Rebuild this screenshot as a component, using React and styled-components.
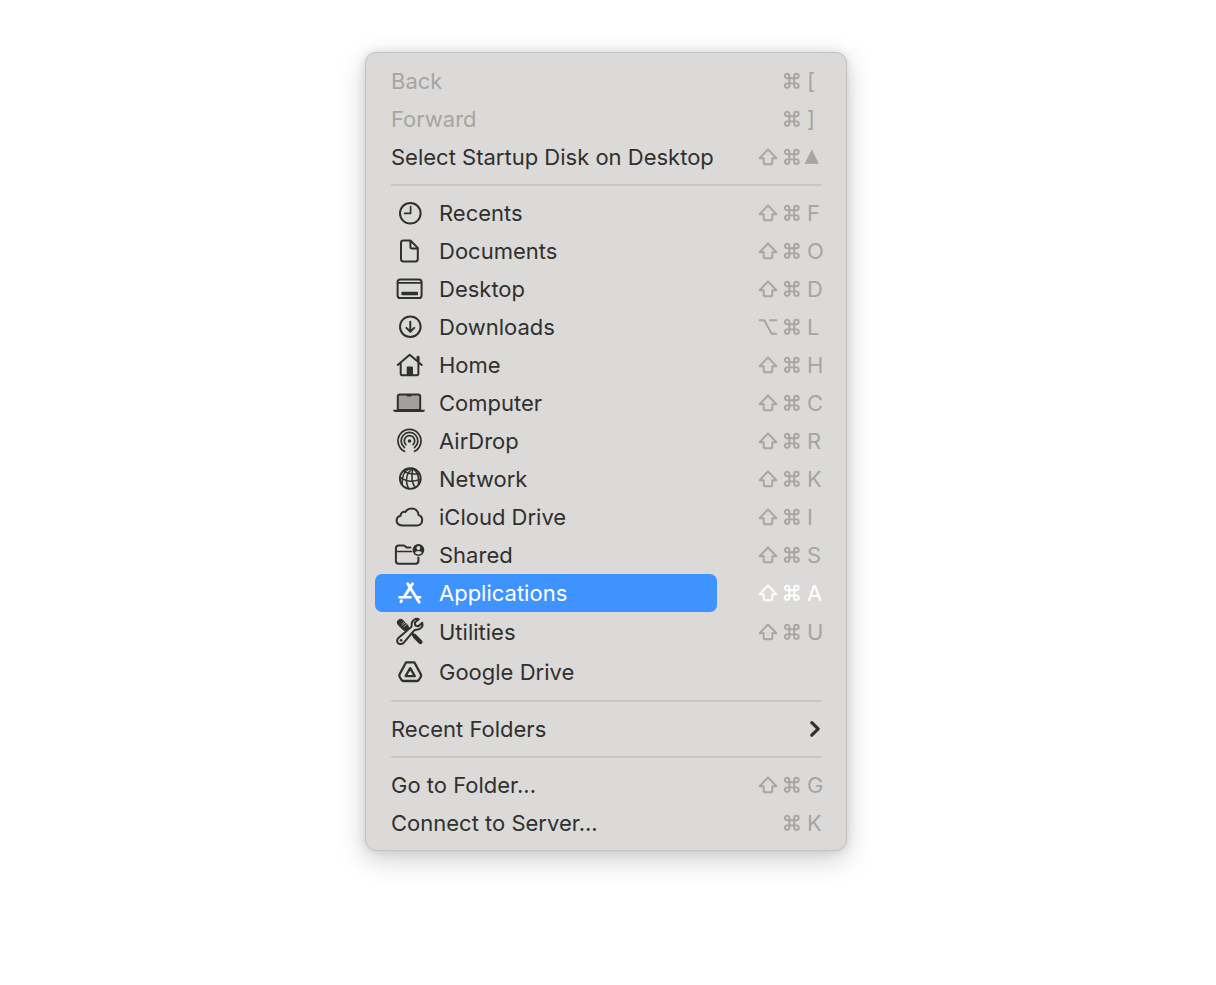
import React from "react";
import styled, { createGlobalStyle } from "styled-components";

const GlobalStyle = createGlobalStyle`
  *, *::before, *::after { box-sizing: border-box; }
  body { margin: 0; background: #fff; }
`;

const Page = styled.main`
  display: flex;
  justify-content: center;
  align-items: flex-start;
  min-height: 100vh;
  padding: 52px 4px 52px 0;
  background: #ffffff;
  font-family: Inter, "Liberation Sans", sans-serif;
`;

const Menu = styled.div`
  width: 100%;
  max-width: 482px;
  padding: 9px 0 8px;
  border: 1px solid #c3c2c1;
  border-radius: 11px;
  background: #dbdad8;
  box-shadow: 0 8px 28px rgba(0, 0, 0, 0.2), 0 0 10px rgba(0, 0, 0, 0.1);
`;

const Row = styled.button`
  display: flex;
  align-items: center;
  justify-content: space-between;
  width: 100%;
  height: ${(p) => (p.$tall ? 40 : 38)}px;
  padding: 0 22px 0 9px;
  border: 0;
  background: none;
  font-family: inherit;
  font-size: 22px;
  line-height: 28px;
  text-align: left;
  color: ${(p) => (p.$active ? "#ffffff" : "#30302f")};

  &:disabled { color: #a6a5a3; }
`;

const Title = styled.span`
  display: flex;
  align-items: center;
  gap: 10px;
  width: 342px;
  height: 38px;
  padding-left: 16px;
  border-radius: 7px;
  white-space: nowrap;
  background: ${(p) => (p.$active ? "#3f93fe" : "transparent")};
`;

const IconCell = styled.span`
  display: flex;
  justify-content: center;
  width: 38px;
`;

const Drawing = styled.svg`
  display: block;
  width: ${(p) => p.$size}px;
  height: ${(p) => p.$size}px;
  overflow: visible;
  fill: none;
  stroke: currentColor;
  stroke-width: ${(p) => p.$stroke || 2};
  stroke-linecap: round;
  stroke-linejoin: round;
`;

const Keys = styled.span`
  display: grid;
  grid-template-columns: 25px 24px 17px;
  align-items: center;
  color: ${(p) => (p.$active ? "#ffffff" : "#a6a5a3")};
`;

const Key = styled.span`
  grid-column: ${(p) => p.$column};
  white-space: nowrap;
`;

const Separator = styled.hr`
  height: 18px;
  margin: 0 24px 0 25px;
  padding: 8px 0;
  border: 0;
  background: #c8c7c5 content-box;
`;

const icons = {
  clock: (
    <>
      <circle cx="16.3" cy="16.3" r="10.3" />
      <path d="M16.6 9.600v6.700H10.600" strokeWidth="1.7" />
    </>
  ),
  document: (
    <path d="M16.4 5.500H9.4Q7 5.500 7 7.900V24.100Q7 26.500 9.4 26.500H21.4Q23.8 26.500 23.8 24.100V12.900L16.4 5.500V11.800Q16.4 13.400 18 13.400H23.6" />
  ),
  desktop: (
    <>
      <rect x="3.6" y="6.400" width="24" height="18.6" rx="2.6" />
      <path d="M4 9.900H27.2" strokeWidth="1.6" />
      <rect x="7.4" y="18.700" width="16.6" height="3.6" rx="0.8" fill="currentColor" stroke="none" />
    </>
  ),
  download: (
    <>
      <circle cx="16.3" cy="15.700" r="10.3" />
      <path d="M16.3 10.700V20.300M12.4 16.900L16.3 20.700L20.2 16.900" />
    </>
  ),
  home: (
    <>
      <path d="M3.7 15.900L15.7 5.800L27.8 15.900M6.7 14.200V24.400Q6.7 26.200 8.5 26.200H22.6Q24.4 26.200 24.4 24.400V8" />
      <path d="M22.9 7.700V11.500L25 13.200V7.700Z" fill="currentColor" strokeWidth="0.6" />
      <path d="M12.7 26.500V18.500Q12.7 17.500 13.7 17.500H18Q19 17.500 19 18.500V26.500Z" fill="currentColor" stroke="none" />
    </>
  ),
  computer: (
    <>
      <path d="M3.8 23V9.500Q3.8 7.400 5.900 7.400H24.1Q26.2 7.400 26.2 9.500V23Z" fill="#a1a09f" />
      <path d="M12.3 7.500H17.9L17 9.500H13.2Z" fill="currentColor" stroke="none" />
      <path d="M-1 22.700H31Q30.8 24.900 28.8 24.900H1.2Q-0.8 24.900 -1 22.700Z" fill="currentColor" stroke="none" />
    </>
  ),
  airdrop: (
    <>
      <g strokeWidth="1.7">
        <path d="M10.5 26.3A11.5 11.5 0 1 1 20.5 26.3" />
        <path d="M10.5 22.6A8.4 8.4 0 1 1 20.5 22.6" />
        <path d="M11.9 19.6A5.2 5.2 0 1 1 19.1 19.6" />
      </g>
      <circle cx="15.5" cy="16" r="1.8" fill="currentColor" stroke="none" />
    </>
  ),
  network: (
    <g transform="translate(0 0.7)">
      <circle cx="16.3" cy="14.8" r="10.4" strokeWidth="1.9" />
      <g strokeWidth="1.5">
        <path d="M18.8 4.9C12.6 8.6 10.6 16.4 14.6 25" />
        <path d="M18.8 4.9C17.2 12 17.4 18.8 21.2 23.8" />
        <path d="M18.8 4.9C23.4 8 25.4 13.6 24.4 20.4" />
        <path d="M18.8 4.9C11.6 5 8 9.4 8.2 20.8" />
        <path d="M9.6 7.4C13.8 10.4 19.2 10.6 25.4 10" />
        <path d="M6.2 13.6C12.6 18.2 19.8 18.4 26.6 15.4" />
      </g>
    </g>
  ),
  cloud: (
    <path d="M8 24.500C4.600 24.500 2.600 22.400 2.600 19.600C2.600 17 4.300 15.200 6.600 14.700C6.500 12 9 10.200 11.400 11C12.700 8.700 15 7.400 17.600 7.400C21.500 7.400 24.300 10.200 24.500 14C26.700 14.700 28.200 16.600 28.200 19.100C28.200 22.200 25.900 24.500 22.800 24.500Z" />
  ),
  shared: (
    <>
      <path d="M16.400 8.400H12.600L10.800 7Q10.200 6.600 9.400 6.600H4.700Q1.900 6.600 1.900 9.400V22Q1.900 24.800 4.700 24.800H21.600Q24.400 24.800 24.400 22V18.600" />
      <path d="M2.200 12.500H17.400" strokeWidth="1.700" />
      <circle cx="24.400" cy="11" r="5.900" fill="currentColor" stroke="none" />
      <circle cx="24.400" cy="9" r="1.900" fill="#dbdad8" stroke="none" />
      <path d="M20.900 14Q21.600 11.900 24.400 11.900T27.900 14Q26.400 15.400 24.400 15.400T20.900 14Z" fill="#dbdad8" stroke="none" />
    </>
  ),
  applications: (
    <g strokeWidth="2.9">
      <path d="M18.500 6.800L10.400 19.800M13.700 6.800L25.200 25.200M7.500 23.800L6.900 24.800" />
      <path d="M5.300 20.200H16.600M22.800 20.200H26.200" strokeWidth="2.400" />
    </g>
  ),
  utilities: (
    <>
      <path d="M6.600 6.600L11.200 11.200" strokeWidth="7.200" />
      <path d="M13 13L21 20.400" strokeWidth="2.800" />
      <path d="M20.800 20.200L26.400 26" strokeWidth="4.400" />
      <path d="M8.200 7.400L9.600 6M8.200 9.400L11.600 6.600M10 10.800L12.400 8.600" stroke="#dbdad8" strokeWidth="0.700" />
      <path d="M24.800 3.200C21.200 1.900 17.300 4.800 17.700 8.600Q17.900 10.300 16.900 11.300L4.900 21.400C2.600 23.300 2.800 25.800 4.200 27.200C5.800 28.600 8.400 28.400 9.800 26.600L20 14.700Q20.900 13.600 22.400 13.700C26.700 13.700 29.500 10.600 28.300 6.700L24.400 10.200L21.300 9.500L20.800 6.600Z" fill="#dbdad8" strokeWidth="2" />
      <circle cx="7.100" cy="24.200" r="1.300" fill="currentColor" stroke="none" />
    </>
  ),
  drive: (
    <g strokeWidth="2.300">
      <path d="M12.100 6.300H20.300L26.800 18.300Q27.500 19.700 26.700 21L24.800 24Q24.100 25 22.900 25H9.500Q8.300 25 7.600 24L5.700 21Q4.900 19.700 5.600 18.300Z" />
      <path d="M16.200 12.200L20.800 20.100H11.600Z" />
    </g>
  ),
};

const keyDrawings = {
  shift: <path d="M10 2.500L18.400 11.200H14.300V15.900Q14.300 17.200 13 17.200H7Q5.700 17.200 5.700 15.900V11.200H1.600Z" />,
  command: (
    <path d="M6.400 7.200H11.200V12.400H6.400ZM6.400 7.200H4.200A2.250 2.250 0 1 1 6.400 4.950ZM11.200 7.200V4.950A2.250 2.250 0 1 1 13.450 7.200ZM11.200 12.400H13.450A2.250 2.250 0 1 1 11.200 14.650ZM6.400 12.400V14.650A2.250 2.250 0 1 1 4.200 12.400Z" />
  ),
  option: <path d="M1.700 3.200H6.300L13.600 16.800H18.400M12 3.200H18.400" />,
  triangle: (
    <path d="M4.900 3.500L-1.700 16.300H11.100L4.900 3.500Z" fill="currentColor" strokeWidth="1" />
  ),
};

function Icon({ name }) {
  return (
    <Drawing $size={32} viewBox="0 0 32 32" aria-hidden="true">
      {icons[name]}
    </Drawing>
  );
}

function KeySymbol({ name }) {
  return (
    <Drawing $size={20} $stroke={1.9} viewBox="0 0 20 20" aria-hidden="true">
      {keyDrawings[name]}
    </Drawing>
  );
}

function Shortcut({ modifier, letter, active }) {
  return (
    <Keys $active={active}>
      {modifier && (
        <Key $column={1}>
          <KeySymbol name={modifier} />
        </Key>
      )}
      <Key $column={2}>
        <KeySymbol name="command" />
      </Key>
      <Key $column={3}>{letter === "triangle" ? <KeySymbol name="triangle" /> : letter}</Key>
    </Keys>
  );
}

function Chevron() {
  return (
    <Drawing $size={20} $stroke={3.2} viewBox="4 0 20 20" aria-hidden="true">
      <path d="M11.800 3.600L18.200 9.900L11.800 16.200" />
    </Drawing>
  );
}

function Item({ label, icon, modifier, letter, active, disabled, tall, submenu }) {
  return (
    <Row
      type="button"
      role="menuitem"
      disabled={disabled}
      aria-haspopup={submenu ? "menu" : undefined}
      $active={active}
      $tall={tall}
    >
      <Title $active={active}>
        {icon && (
          <IconCell>
            <Icon name={icon} />
          </IconCell>
        )}
        {label}
      </Title>
      {letter && <Shortcut modifier={modifier} letter={letter} active={active} />}
      {submenu && <Chevron />}
    </Row>
  );
}

const groups = [
  [
    { label: "Back", letter: "[", disabled: true },
    { label: "Forward", letter: "]", disabled: true },
    { label: "Select Startup Disk on Desktop", modifier: "shift", letter: "triangle" },
  ],
  [
    { label: "Recents", icon: "clock", modifier: "shift", letter: "F" },
    { label: "Documents", icon: "document", modifier: "shift", letter: "O" },
    { label: "Desktop", icon: "desktop", modifier: "shift", letter: "D" },
    { label: "Downloads", icon: "download", modifier: "option", letter: "L" },
    { label: "Home", icon: "home", modifier: "shift", letter: "H" },
    { label: "Computer", icon: "computer", modifier: "shift", letter: "C" },
    { label: "AirDrop", icon: "airdrop", modifier: "shift", letter: "R" },
    { label: "Network", icon: "network", modifier: "shift", letter: "K" },
    { label: "iCloud Drive", icon: "cloud", modifier: "shift", letter: "I" },
    { label: "Shared", icon: "shared", modifier: "shift", letter: "S" },
    { label: "Applications", icon: "applications", modifier: "shift", letter: "A", active: true },
    { label: "Utilities", icon: "utilities", modifier: "shift", letter: "U", tall: true },
    { label: "Google Drive", icon: "drive", tall: true },
  ],
  [{ label: "Recent Folders", submenu: true }],
  [
    { label: "Go to Folder...", modifier: "shift", letter: "G" },
    { label: "Connect to Server...", letter: "K" },
  ],
];

export default function App() {
  return (
    <>
      <GlobalStyle />
      <Page>
        <Menu role="menu" aria-label="Go">
          {groups.map((items, index) => (
            <React.Fragment key={index}>
              {index > 0 && <Separator />}
              {items.map((item) => (
                <Item key={item.label} {...item} />
              ))}
            </React.Fragment>
          ))}
        </Menu>
      </Page>
    </>
  );
}
